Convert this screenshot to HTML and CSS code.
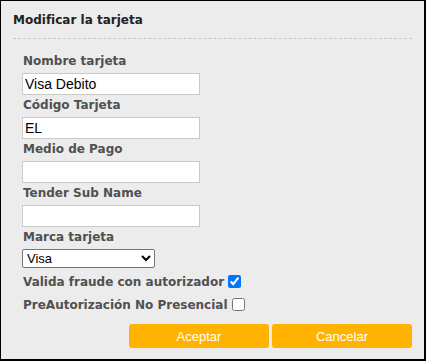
FILE: index.html
```html
<!DOCTYPE html>
<html lang="es">
<head>
  <meta charset="UTF-8" />
  <title>Modificar la tarjeta</title>
  <link rel="stylesheet" href="styles.css">
</head>
<body>

  <!-- Card edit dialog -->
  <div class="dialog">
    <div class="dialog-head">
      <h1>Modificar la tarjeta</h1>
    </div>

    <form class="card-form" onsubmit="return false">
      <div class="field">
        <label for="nombre">Nombre tarjeta</label>
        <input type="text" id="nombre" value="Visa Debito">
      </div>
      <div class="field">
        <label for="codigo">Código Tarjeta</label>
        <input type="text" id="codigo" value="EL">
      </div>
      <div class="field">
        <label for="medio">Medio de Pago</label>
        <input type="text" id="medio">
      </div>
      <div class="field">
        <label for="tender">Tender Sub Name</label>
        <input type="text" id="tender">
      </div>
      <div class="field">
        <label for="marca">Marca tarjeta</label>
        <select id="marca">
          <option>Visa</option>
          <option>Mastercard</option>
        </select>
      </div>

      <label class="check-row">Valida fraude con autorizador <input type="checkbox" checked></label>
      <label class="check-row">PreAutorización No Presencial <input type="checkbox"></label>

      <div class="actions">
        <button type="submit" class="btn">Aceptar</button>
        <button type="button" class="btn">Cancelar</button>
      </div>
    </form>
  </div>

</body>
</html>
```

FILE: styles.css
```css
* { margin: 0; padding: 0; box-sizing: border-box; }
body { background: #fff; font-family: 'DejaVu Sans', Verdana, sans-serif; }

.dialog {
  width: 426px;
  height: 361px;
  background: #ececec;
  border: 1px solid #000;
  border-right-width: 2px;
  border-bottom-width: 2px;
}

.dialog-head {
  margin: 0 12px;
  padding: 11px 0 10px;
  border-bottom: 1px dashed #c8c8c8;
}
.dialog-head h1 { font-size: 12px; line-height: 16px; font-weight: bold; color: #222; }

.card-form { padding: 12px 0 0 21px; }

.field label {
  display: block;
  font-size: 12px; font-weight: bold; color: #505050;
  line-height: 16px;
  padding: 2px 0 4px 1px;
}
.field input {
  display: block;
  width: 178px; height: 22px;
  padding: 0 2px;
  border: 1px solid #c9c9c9;
  background: #fff;
  font: 14px 'Liberation Sans', Arial, sans-serif;
  color: #000;
  outline: none;
}
.field select {
  display: block;
  width: 133px; height: 19px;
  font: 13px 'Liberation Sans', Arial, sans-serif;
  border: 1px solid #767676; border-radius: 2px;
  background: #fff;
  margin-bottom: 2px;
}

.check-row {
  display: flex; align-items: center; gap: 4px;
  height: 23px;
  padding-left: 1px;
  font-size: 12px; font-weight: bold; color: #505050;
}
.check-row input { width: 13px; height: 13px; margin: 0; accent-color: #0075ff; }

.actions {
  display: flex; justify-content: flex-end; gap: 3px;
  margin-top: 8px; padding-right: 12px;
}
.btn {
  width: 140px; height: 24px;
  background: #ffb300; color: #fff;
  border: none; border-radius: 3px;
  font: 13px 'Liberation Sans', Arial, sans-serif;
  cursor: pointer;
}
```
